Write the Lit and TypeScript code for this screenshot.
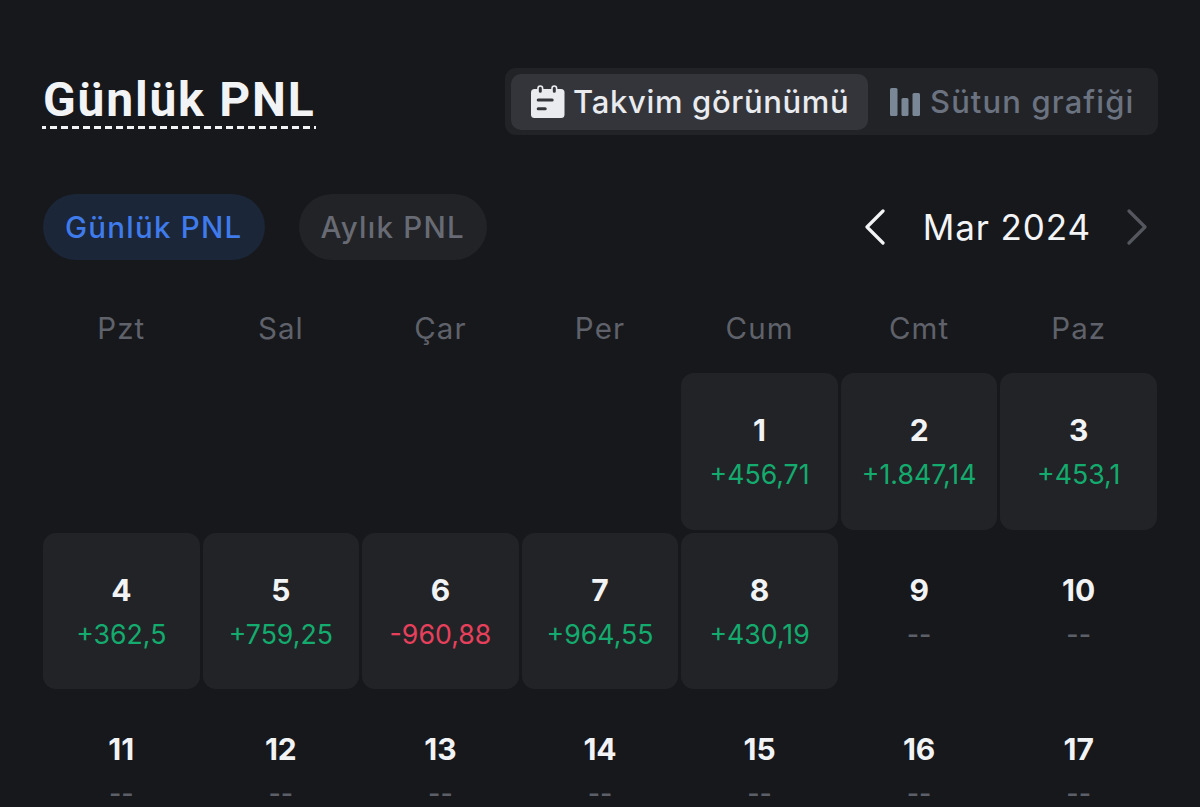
import { LitElement, html, css } from "lit";
import { customElement } from "lit/decorators.js";

type Cell = { d: number; v?: string; k?: "up" | "down" };

const CELLS: (Cell | null)[] = [
  null, null, null, null,
  { d: 1, v: "+456,71", k: "up" },
  { d: 2, v: "+1.847,14", k: "up" },
  { d: 3, v: "+453,1", k: "up" },
  { d: 4, v: "+362,5", k: "up" },
  { d: 5, v: "+759,25", k: "up" },
  { d: 6, v: "-960,88", k: "down" },
  { d: 7, v: "+964,55", k: "up" },
  { d: 8, v: "+430,19", k: "up" },
  { d: 9 }, { d: 10 }, { d: 11 }, { d: 12 }, { d: 13 }, { d: 14 }, { d: 15 }, { d: 16 }, { d: 17 },
];

@customElement("app-root")
export class AppRoot extends LitElement {
  static styles = css`
    :host {
      display: block;
      height: 807px;
      overflow: hidden;
      background: #17181c;
      font-family: Inter, "Noto Sans", sans-serif;
      color: #f3f4f6;
    }
    .page { padding: 68px 43px 0 43px; }
    .head { display: flex; justify-content: space-between; align-items: flex-start; height: 67px; margin-right: -1px; }
    .title {
      font-family: Roboto, sans-serif;
      font-weight: 700;
      font-size: 48px;
      letter-spacing: 1.8px;
      line-height: 56px;
      color: #f2f3f5;
      margin-top: 4px;
      white-space: nowrap;
    }
    .title::after {
      content: "";
      display: block;
      height: 3px;
      margin: -2px -1px 0 -1px;
      background: repeating-linear-gradient(90deg, #f2f3f5 -3px 4px, transparent 4px 8px);
    }
    .seg {
      display: flex;
      align-items: center;
      background: #222327;
      border-radius: 11px;
      padding: 5px 6px;
      height: 67px;
      box-sizing: border-box;
      width: 653px;
    }
    .seg-btn {
      display: flex;
      align-items: center;
      gap: 8px;
      height: 56px;
      border-radius: 10px;
      font-size: 31px;
      font-weight: 500;
      box-sizing: border-box;
      white-space: nowrap;
    }
    .seg-on { background: #33353b; color: #e9ebee; width: 357px; padding-left: 20px; letter-spacing: 0.66px; }
    .seg-off { color: #6b7280; padding-left: 22px; gap: 10px; letter-spacing: 1.1px; }
    .row2 { display: flex; align-items: center; justify-content: space-between; margin-top: 59px; height: 66px; }
    .pills { display: flex; gap: 34px; }
    .pill {
      height: 66px;
      border-radius: 33px;
      display: flex;
      align-items: center;
      padding: 0 22px;
      font-size: 29.5px;
      font-weight: 500;
      letter-spacing: 1.25px;
      box-sizing: border-box;
      white-space: nowrap;
    }
    .pill-on { background: #1b2638; color: #3f7bea; }
    .pill-off { background: #222327; color: #686b74; }
    .month { display: flex; align-items: center; }
    .month-label { font-size: 35px; letter-spacing: 0.9px; color: #f3f4f6; margin: 0 34px 0 36px; white-space: nowrap; }
    .chev { display: block; width: 24px; height: 36px; fill: none; stroke-width: 3.2px; stroke-linecap: round; stroke-linejoin: round; }
    .chev-l { stroke: #f3f4f6; }
    .chev-r { stroke: #55575e; margin-right: 8px; }
    .week {
      display: grid;
      grid-template-columns: repeat(7, 1fr);
      column-gap: 3px;
      margin-top: 48px;
      height: 40px;
      align-items: center;
      text-align: center;
      font-size: 29.5px;
      letter-spacing: 1.1px;
      color: #5f626a;
    }
    .grid {
      display: grid;
      grid-template-columns: repeat(7, 1fr);
      grid-auto-rows: 156.6px;
      gap: 3px;
      margin-top: 25px;
    }
    .cell {
      display: flex;
      flex-direction: column;
      align-items: center;
      border-radius: 13px;
      padding-top: 37px;
      box-sizing: border-box;
    }
    .filled { background: #222327; }
    .num { font-size: 30px; font-weight: 700; line-height: 40px; color: #f2f3f5; }
    .val { font-size: 26.7px; line-height: 36px; margin-top: 6px; white-space: nowrap; }
    .up { color: #14ab6e; }
    .down { color: #e8405c; }
    .none { color: #5c5f67; font-weight: 500; }
  `;

  private renderCell(c: Cell | null) {
    if (!c) return html`<div class="cell"></div>`;
    return html`<div class="cell ${c.v ? "filled" : ""}">
      <div class="num">${c.d}</div>
      <div class="val ${c.k ?? "none"}">${c.v ?? "--"}</div>
    </div>`;
  }

  render() {
    return html`<div class="page">
      <div class="head">
        <div class="title">Günlük PNL</div>
        <div class="seg">
          <div class="seg-btn seg-on">
            <svg width="34" height="34" viewBox="0 0 34 34">
              <rect x="0" y="4" width="33.5" height="29" rx="3.5" fill="#e9ebee"/>
              <rect x="7" y="1" width="4.6" height="7.6" rx="2.3" fill="#33353b" stroke="#e9ebee" stroke-width="1.6"/>
              <rect x="21" y="1" width="4.6" height="7.6" rx="2.3" fill="#33353b" stroke="#e9ebee" stroke-width="1.6"/>
              <rect x="5.7" y="13.5" width="17" height="3" rx="1.5" fill="#33353b"/>
              <rect x="5.7" y="22.2" width="10" height="3" rx="1.5" fill="#33353b"/>
            </svg>
            Takvim görünümü
          </div>
          <div class="seg-btn seg-off">
            <svg width="30" height="28" viewBox="0 0 30 28">
              <rect x="0" y="0" width="7.5" height="28" rx="1.5" fill="#7a8796"/>
              <rect x="11.5" y="10" width="7" height="18" rx="1.5" fill="#7a8796"/>
              <rect x="22.5" y="5" width="7.5" height="23" rx="1.5" fill="#7a8796"/>
            </svg>
            Sütun grafiği
          </div>
        </div>
      </div>
      <div class="row2">
        <div class="pills">
          <div class="pill pill-on">Günlük PNL</div>
          <div class="pill pill-off">Aylık PNL</div>
        </div>
        <div class="month">
          <svg class="chev chev-l" viewBox="0 0 24 36"><path d="M20 2 4 18l16 16"/></svg>
          <div class="month-label">Mar 2024</div>
          <svg class="chev chev-r" viewBox="0 0 24 36"><path d="M4 2l16 16L4 34"/></svg>
        </div>
      </div>
      <div class="week">
        <div>Pzt</div><div>Sal</div><div>Çar</div><div>Per</div><div>Cum</div><div>Cmt</div><div>Paz</div>
      </div>
      <div class="grid">${CELLS.map((c) => this.renderCell(c))}</div>
    </div>`;
  }
}
